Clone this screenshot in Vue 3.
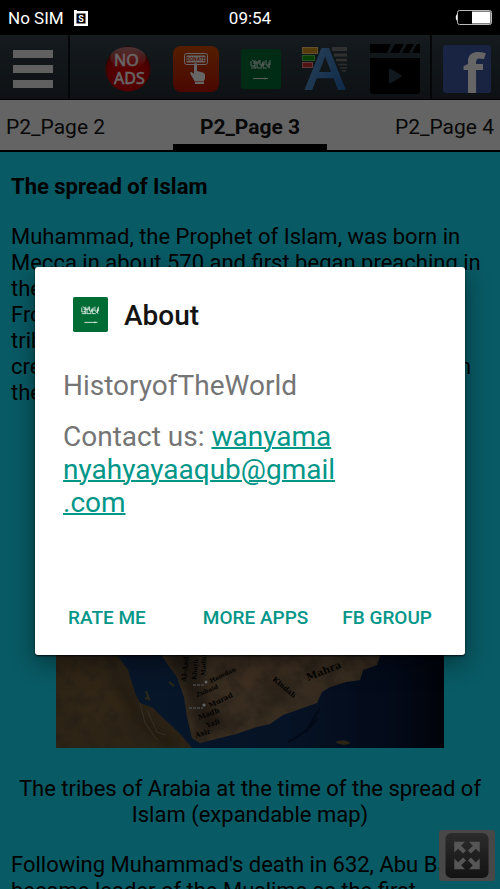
<template>
  <div class="screen">
    <!-- Status bar -->
    <div class="status-bar">
      <div class="status-left">
        <span>No SIM</span>
        <svg class="sim-icon" viewBox="0 0 14 16" aria-hidden="true">
          <path d="M0 0h3v1h11v15H0z" fill="#fff" />
          <rect x="2.5" y="3.5" width="9" height="10" fill="#000" />
          <text x="7" y="12" text-anchor="middle" font-size="9" font-weight="700" fill="#fff">S</text>
        </svg>
      </div>
      <span class="clock">09:54</span>
      <div class="status-right">
        <svg class="battery" viewBox="0 0 37 15" role="img" aria-label="Battery">
          <path d="M3 4C0 4 0 11 3 11" fill="#fff" />
          <rect x="2.5" y="0.5" width="34" height="14" rx="2" fill="#000" stroke="#bbb" />
          <rect x="17" y="1.5" width="18.5" height="12" fill="#fff" />
        </svg>
      </div>
    </div>

    <div class="window">
      <!-- Toolbar -->
      <header class="toolbar">
        <button class="menu-btn" aria-label="Menu">
          <span class="bar"></span>
          <span class="bar"></span>
          <span class="bar"></span>
        </button>
        <nav class="tools">
          <button class="tool" aria-label="No ads">
            <svg width="46" height="46" viewBox="0 0 46 46">
              <defs>
                <radialGradient id="ball" cx="50%" cy="60%" r="55%">
                  <stop offset="0" stop-color="#e60000" />
                  <stop offset="0.75" stop-color="#c80000" />
                  <stop offset="1" stop-color="#870000" />
                </radialGradient>
                <linearGradient id="gloss" x1="0" y1="0" x2="0" y2="1">
                  <stop offset="0" stop-color="#fff" stop-opacity="0.5" />
                  <stop offset="1" stop-color="#fff" stop-opacity="0" />
                </linearGradient>
              </defs>
              <circle cx="23" cy="23" r="22.5" fill="url(#ball)" />
              <ellipse cx="23" cy="12" rx="18" ry="11" fill="url(#gloss)" />
              <text x="9" y="20" class="ads-text">NO</text>
              <text x="9" y="38" class="ads-text">ADS</text>
            </svg>
          </button>
          <button class="tool" aria-label="Donate">
            <svg width="46" height="46" viewBox="0 0 46 46">
              <defs>
                <linearGradient id="donate" x1="0" y1="0" x2="0" y2="1">
                  <stop offset="0" stop-color="#d24b00" />
                  <stop offset="1" stop-color="#b91400" />
                </linearGradient>
              </defs>
              <rect width="46" height="46" rx="8" fill="url(#donate)" />
              <rect x="11.5" y="7.5" width="23" height="11" rx="2" fill="none" stroke="#fff" />
              <rect x="13.5" y="9.5" width="19" height="7" rx="1" fill="#fff" />
              <text x="23" y="15" text-anchor="middle" font-size="5" font-weight="700" fill="#d23c10">DONATE</text>
              <path d="M21 18q1.500-2 3 0v7l6 1.500q2 .5 2 2.500v4l-2 3H22l-4-7q-2-3 .5-3L21 28z" fill="#fff" />
              <path d="M22 34h9v4h-9z" fill="#fff" />
              <path d="M22 35.500h9" stroke="#d22800" stroke-width="0.6" />
            </svg>
          </button>
          <button class="tool" aria-label="Saudi Arabia">
            <svg width="40" height="40" viewBox="0 0 40 40">
              <rect width="40" height="40" rx="3" fill="#006c35" />
              <path :d="scriptPath" class="flag-script" />
              <path d="M12 29.500h15M24 28.500v2" class="flag-sword" />
            </svg>
          </button>
          <button class="tool" aria-label="Text settings">
            <svg width="46" height="46" viewBox="0 0 46 46">
              <defs>
                <linearGradient id="letter" x1="0" y1="0" x2="1" y2="1">
                  <stop offset="0" stop-color="#6eaae1" />
                  <stop offset="1" stop-color="#1e64b4" />
                </linearGradient>
              </defs>
              <rect x="0.500" y="1.500" width="15" height="6" fill="#d79620" stroke="#f5c878" />
              <rect x="0.500" y="9.500" width="12" height="5" fill="#14a014" stroke="#5ad25a" />
              <rect x="0.500" y="16.500" width="10" height="5" fill="#c83232" stroke="#f09090" />
              <path d="M30 3h15" stroke="#787878" stroke-width="4" />
              <path d="M32 9h13" stroke="#787878" stroke-width="3" />
              <path d="M34 14h11" stroke="#787878" stroke-width="2.500" />
              <path d="M36 18.500h9M38 22h7M40 25h4" stroke="#6e6e6e" stroke-width="1.500" />
              <text x="23" y="43" text-anchor="middle" class="letter-a">A</text>
            </svg>
          </button>
          <button class="tool" aria-label="Videos">
            <svg width="50" height="50" viewBox="0 0 50 50">
              <path d="M0 0h21l-4 9H0zM25 0h9l-5 9h-9zM37 0h7l-5 9h-7zM47 0h3v9h-8z" />
              <path d="M0 14h50v33q0 3-3 3H3q-3 0-3-3z" />
              <path d="M19 26q0-2 2-1l10 6q1.500 1 0 2l-10 6q-2 1-2-1z" fill="#2f3f4b" />
            </svg>
          </button>
        </nav>
        <a class="facebook" href="#" aria-label="Facebook">
          <svg width="48" height="48" viewBox="0 0 48 48">
            <rect width="48" height="48" rx="3" fill="#3c5aa5" />
            <text x="30" y="48" text-anchor="middle" class="fb-mark">f</text>
          </svg>
        </a>
      </header>

      <!-- Page tabs -->
      <nav class="tabs">
        <button
          v-for="tab in tabs"
          :key="tab"
          class="tab"
          :class="{ active: tab === activeTab }"
          @click="activeTab = tab"
        >
          {{ tab }}
        </button>
      </nav>

      <!-- Article -->
      <main class="article">
        <h1 class="article-title">The spread of Islam</h1>
        <p>
          <span v-for="line in intro" :key="line" class="line">{{ line }}</span>
        </p>
        <figure>
          <svg class="map" viewBox="0 0 388 318" role="img" aria-label="Map of Arabia">
            <defs>
              <linearGradient id="sea" x1="0" y1="0" x2="1" y2="0">
                <stop offset="0" stop-color="#163e70" />
                <stop offset="0.6" stop-color="#102f5c" />
                <stop offset="0.88" stop-color="#08183c" />
                <stop offset="1" stop-color="#030818" />
              </linearGradient>
              <filter id="soft" x="-20%" y="-20%" width="140%" height="140%">
                <feGaussianBlur stdDeviation="6" />
              </filter>
              <filter id="terrain" x="0" y="0" width="100%" height="100%">
                <feTurbulence type="fractalNoise" baseFrequency="0.06" numOctaves="4" seed="7" />
                <feColorMatrix values="0 0 0 0 0.1  0 0 0 0 0.07  0 0 0 0 0.04  1.6 0 0 0 -0.6" />
              </filter>
              <clipPath id="land">
                <path :d="africaPath" />
                <path :d="arabiaPath" />
              </clipPath>
            </defs>
            <rect width="388" height="318" fill="url(#sea)" />
            <path :d="africaPath" fill="#735a38" />
            <path :d="arabiaPath" fill="#8c6f50" />
            <g filter="url(#soft)" clip-path="url(#land)">
              <path d="M5 225L25 230L55 240L75 280L60 300L20 290z" fill="#7c5f39" />
              <path d="M60 250L85 290L120 318" fill="none" stroke="#45351f" stroke-width="8" />
              <path d="M108 220L140 225L150 275L175 295L145 305L135 270z" fill="#4a3b2a" />
              <path d="M160 225L230 228L300 226L240 240L180 262z" fill="#9b7654" />
              <path d="M200 258L225 245L240 268L210 270z" fill="#68543e" />
            </g>
            <g clip-path="url(#land)">
              <rect width="388" height="318" filter="url(#terrain)" />
            </g>
            <path d="M84 273l5 20 12 17M91 280l10 22 8 3" fill="none" stroke="#8c7658" stroke-width="1" />
            <path d="M90 261l3 8 -4-1M113 252l5 4" fill="none" stroke="#6b6a3a" stroke-width="2" />
            <path d="M279 312q9-4 16 1q-8 4-16-1" fill="#6b5a36" />
            <path d="M250 302l14-24M232 312q20-10 30-24" fill="none" stroke="#071a3c" stroke-width="2" />
            <text
              v-for="label in mapLabels"
              :key="label.text"
              :transform="`translate(${label.x} ${label.y}) rotate(${label.angle})`"
              :font-size="label.size"
              class="map-label"
            >{{ label.text }}</text>
            <path d="M137 255h12M133 278h14" stroke="#a09c98" stroke-width="2" stroke-dasharray="3 1" />
            <circle cx="150" cy="252" r="1.500" fill="#fff" />
            <circle cx="148" cy="275" r="1.500" fill="#fff" />
          </svg>
          <figcaption>The tribes of Arabia at the time of the spread of Islam (expandable map)</figcaption>
        </figure>
        <p>
          <span v-for="line in outro" :key="line" class="line">{{ line }}</span>
        </p>
      </main>

      <button class="expand-btn" aria-label="Full screen">
        <svg width="44" height="45" viewBox="0 0 44 46">
          <defs>
            <linearGradient id="expand" x1="0" y1="0" x2="0" y2="1">
              <stop offset="0" stop-color="#6e6e6e" />
              <stop offset="1" stop-color="#303030" />
            </linearGradient>
          </defs>
          <rect width="44" height="46" rx="6" fill="url(#expand)" />
          <g fill="#d8d8d8">
            <path :d="arrowPath" />
            <path :d="arrowPath" transform="translate(44 0) scale(-1 1)" />
            <path :d="arrowPath" transform="translate(0 46) scale(1 -1)" />
            <path :d="arrowPath" transform="translate(44 46) scale(-1 -1)" />
          </g>
        </svg>
      </button>

      <!-- About dialog -->
      <div class="scrim">
        <section class="dialog" role="dialog" aria-labelledby="about-title">
          <div class="dialog-header">
            <svg class="dialog-icon" viewBox="0 0 40 40" aria-hidden="true">
              <rect width="40" height="40" rx="2" fill="#006c35" />
              <path :d="scriptPath" class="flag-script" />
              <path d="M13 29h15M25 28v2" class="flag-sword" />
            </svg>
            <h2 id="about-title">About</h2>
          </div>
          <div class="dialog-body">
            <p>HistoryofTheWorld</p>
            <p>
              Contact us:
              <a href="mailto:wanyamanyahyayaaqub@gmail.com">wanyama<br>nyahyayaaqub@gmail<br>.com</a>
            </p>
          </div>
          <div class="dialog-actions">
            <button class="action first">RATE ME</button>
            <button class="action">MORE APPS</button>
            <button class="action">FB GROUP</button>
          </div>
        </section>
      </div>
    </div>
  </div>
</template>

<script setup>
import { ref } from 'vue';

const tabs = ['P2_Page 2', 'P2_Page 3', 'P2_Page 4'];
const activeTab = ref('P2_Page 3');

const intro = [
  'Muhammad, the Prophet of Islam, was born in',
  'Mecca in about 570 and first began preaching in',
  'the city in 610, before migrating to Medina.',
  'From there he and his companions united the',
  'tribes of Arabia under the banner of Islam and',
  'creating a single Arab Muslim religious polity in',
  'the Arabian peninsula.'
];

const outro = [
  'Following Muhammad\'s death in 632, Abu Bakr',
  'became leader of the Muslims as the first'
];

const mapLabels = [
  { text: 'Mahra', x: 252, y: 251, angle: -22, size: 10 },
  { text: 'Kindah', x: 216, y: 250, angle: 40, size: 7 },
  { text: 'Hamdan', x: 155, y: 253, angle: -26, size: 6 },
  { text: 'Zubaid', x: 141, y: 267, angle: -22, size: 6 },
  { text: 'Murad', x: 154, y: 278, angle: -26, size: 7 },
  { text: 'Madh', x: 143, y: 290, angle: -20, size: 7 },
  { text: 'Yafi', x: 151, y: 298, angle: -20, size: 7 },
  { text: 'Asir', x: 140, y: 308, angle: -18, size: 7 },
  { text: 'Al-Azd', x: 130, y: 252, angle: -84, size: 7 },
  { text: 'Khath', x: 140, y: 250, angle: -84, size: 6 },
  { text: 'Madhhij', x: 149, y: 246, angle: -86, size: 6 }
];

const africaPath = 'M0 0H40L50 205L62 226L72 240L79 263L84 273L97 278L108 289L117 297L126 306L136 318H0z';
const arabiaPath = 'M90 0H360L324 226L321 235L307 240L304 250L290 252L274 257L266 262L261 273L244 279L227 285L214 294L201 297L180 304L164 308L144 313L136 308L131 287L128 267L121 247L112 235L104 223z';

// Simplified calligraphy of the flag
const scriptPath = 'M10 12v5h4v-6M12 14h6v-3M16 12v7h5M19 11v5h4v-4M22 14v5h4M25 11v5h4v-5M28 13v5M10 19h5M13 16l2 3M11 11l3 2M20 18l2-5M26 17l3 2';
const arrowPath = 'M9 9h11l-4 4 5 5-3 3-5-5-4 4z';
</script>

<style>
body {
  margin: 0;
}
</style>

<style scoped>
.screen {
  height: 100vh;
  display: flex;
  flex-direction: column;
  overflow: hidden;
  background: #000;
  font-family: Roboto, "Liberation Sans", sans-serif;
}

button {
  border: none;
  padding: 0;
  margin: 0;
  background: none;
  font-family: inherit;
  color: inherit;
  cursor: pointer;
}

svg {
  display: block;
}

.status-bar {
  height: 35px;
  flex-shrink: 0;
  display: flex;
  align-items: center;
  padding: 0 8px;
  color: #fff;
  font-size: 17px;
}

.status-left,
.status-right {
  flex: 1;
  display: flex;
  align-items: center;
  gap: 10px;
}

.status-right {
  justify-content: flex-end;
}

.sim-icon {
  width: 14px;
  height: 16px;
}

.battery {
  width: 37px;
  height: 15px;
}

.window {
  position: relative;
  flex: 1;
  min-height: 0;
  display: flex;
  flex-direction: column;
  overflow: hidden;
  background: #14e1fa;
}

.toolbar {
  height: 64px;
  flex-shrink: 0;
  display: flex;
  border-bottom: 1px solid #000;
  background: linear-gradient(#3a464f, #303d46 20%, #232d34);
}

.menu-btn {
  width: 70px;
  display: flex;
  flex-direction: column;
  justify-content: center;
  gap: 7px;
  padding: 4px 15px 0 13px;
  border-right: 2px solid #0a0f14;
}

.bar {
  height: 8px;
  background: #f0f0f0;
}

.tools {
  flex: 1;
  display: flex;
  align-items: center;
  justify-content: space-between;
  padding: 4px 10px 0 35px;
  border-right: 2px solid #0a0f14;
}

.tools svg,
.facebook svg {
  overflow: visible;
}

.facebook {
  display: flex;
  align-items: center;
  padding: 4px 9px 0 11px;
}

.ads-text {
  font-family: "Noto Sans", sans-serif;
  font-size: 16px;
  fill: #fff;
  stroke: #fff;
  stroke-width: 0.5;
}

.letter-a {
  font-family: "Liberation Sans", sans-serif;
  font-size: 58px;
  fill: url(#letter);
  stroke: url(#letter);
  stroke-width: 2;
}

.fb-mark {
  font-family: "Open Sans", sans-serif;
  font-size: 54px;
  font-weight: 700;
  fill: #fff;
}

.flag-script,
.flag-sword {
  fill: none;
  stroke: #e6f0e9;
  stroke-width: 1;
}

.tabs {
  height: 50px;
  flex-shrink: 0;
  display: flex;
  justify-content: space-between;
  padding: 0 6px;
  background: #fafafa;
  border-bottom: 2px solid #000;
}

.tab {
  padding-top: 10px;
  border-bottom: 6px solid transparent;
  font-size: 21px;
  color: #141414;
}

.tab.active {
  padding-left: 27px;
  padding-right: 27px;
  border-bottom-color: #000;
  font-weight: 700;
}

.article {
  display: flex;
  flex-direction: column;
  gap: 24px;
  padding: 22px 11px 0;
  font-size: 22px;
  line-height: 26px;
  color: #000;
}

.article-title {
  margin: 0;
  font-size: 22px;
  font-weight: 700;
}

.article p,
.article figure {
  margin: 0;
}

.line {
  display: block;
  white-space: nowrap;
}

.map {
  width: calc(100% - 90px);
  margin: 0 auto 28px;
}

.map-label {
  font-family: "DejaVu Serif", serif;
  font-weight: 700;
  fill: #0a0805;
}

figcaption {
  text-align: center;
}

.expand-btn {
  position: absolute;
  right: 5px;
  bottom: 8px;
  padding: 3px 6px;
  border-radius: 3px;
  background: #b4b4b4;
}

.scrim {
  position: absolute;
  inset: 0;
  display: flex;
  align-items: center;
  padding: 0 35px 2px;
  background: rgba(0, 0, 0, 0.6);
}

.dialog {
  flex: 1;
  border-radius: 3px;
  background: #fff;
  box-shadow: 0 8px 24px rgba(0, 0, 0, 0.4), 0 1px 2px rgba(0, 0, 0, 0.8);
}

.dialog-header {
  display: flex;
  align-items: flex-start;
  gap: 16px;
  padding: 30px 38px 0;
}

.dialog-icon {
  width: 35px;
  height: 35px;
}

.dialog-header h2 {
  margin: 0;
  font-size: 28px;
  line-height: 38px;
  font-weight: 500;
  color: #141414;
}

.dialog-body {
  display: flex;
  flex-direction: column;
  gap: 18px;
  padding: 34px 28px 74px;
  font-size: 28px;
  line-height: 33px;
  color: #757575;
}

.dialog-body p {
  margin: 0;
}

.dialog-body a {
  color: #009688;
  text-decoration-thickness: 2px;
}

.dialog-actions {
  display: flex;
  gap: 34px;
  padding: 0 33px 14px;
}

.action {
  height: 48px;
  font-size: 19px;
  font-weight: 500;
  color: #009688;
}

.action.first {
  margin-right: auto;
}
</style>
